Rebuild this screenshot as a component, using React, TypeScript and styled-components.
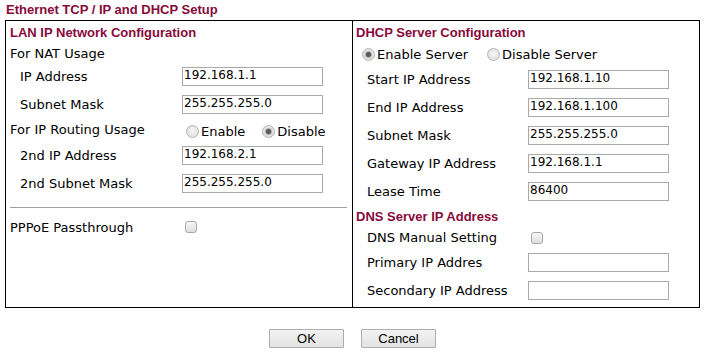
import styled, {createGlobalStyle} from 'styled-components';

const GlobalStyle = createGlobalStyle`
  * {
    box-sizing: border-box;
  }

  body {
    margin: 0;
    background: #fff;
    color: #000;
    font-family: "DejaVu Sans", Verdana, sans-serif;
    font-size: 13px;
  }
`;

const Page = styled.div`
  width: 710px;
  padding-left: 5px;
`;

const Title = styled.div`
  height: 20px;
  line-height: 20px;
  padding-left: 1px;
  font-family: "Liberation Sans", Arial, sans-serif;
  font-weight: bold;
  font-size: 13px;
  color: #870a3a;
`;

const Frame = styled.div`
  display: grid;
  grid-template-columns: 347px 346px;
  width: 695px;
  border: 1px solid #000;
`;

const Panel = styled.div<{ $divider?: boolean; $padLeft: number }>`
  display: flex;
  flex-direction: column;
  padding: 0 4px 3px ${p => p.$padLeft}px;
  border-right: ${p => (p.$divider ? '1px solid #000' : 'none')};
`;

const SectionHeader = styled.div<{ $h: number }>`
  display: flex;
  align-items: center;
  height: ${p => p.$h}px;
  font-family: "Liberation Sans", Arial, sans-serif;
  font-weight: bold;
  font-size: 13px;
  color: #870a3a;
`;

const Row = styled.div<{ $h: number }>`
  display: grid;
  grid-template-columns: 172px auto;
  align-items: center;
  height: ${p => p.$h}px;
`;

const Label = styled.div<{ $indent?: number }>`
  padding-left: ${p => p.$indent ?? 0}px;
  white-space: nowrap;
`;

const TextInput = styled.input`
  width: 141px;
  height: 19px;
  margin: 0;
  padding: 0 1px 2px;
  border: 1px solid #a9a9a9;
  border-radius: 0;
  background: #fff;
  color: #000;
  font-family: "DejaVu Sans", Verdana, sans-serif;
  font-size: 12px;
  outline: none;
`;

const RadioGroup = styled.div<{ $gap: number; $offset: number; $drop?: number }>`
  display: flex;
  align-items: center;
  gap: ${p => p.$gap}px;
  padding-left: ${p => p.$offset}px;
  padding-top: ${p => p.$drop ?? 0}px;
`;

const RadioOption = styled.label`
  display: flex;
  align-items: center;
  gap: 2px;
  white-space: nowrap;
`;

const RadioDot = styled.span<{ $checked?: boolean }>`
  position: relative;
  width: 13px;
  height: 13px;
  border-radius: 50%;
  border: 1px solid #b4b4b4;
  background: radial-gradient(circle at 50% 45%, #f6f6f6 0%, #e2e2e2 70%, #d6d6d6 100%);

  &::after {
    content: '';
    display: ${p => (p.$checked ? 'block' : 'none')};
    position: absolute;
    left: 3px;
    top: 3px;
    width: 5px;
    height: 5px;
    border-radius: 50%;
    background: #5a5a5a;
    box-shadow: 0 0 1px 1px #a8a8a8;
  }
`;

const CheckBox = styled.span`
  display: block;
  width: 12px;
  height: 12px;
  margin-left: 3px;
  border: 1px solid #a8a8a8;
  border-radius: 3px;
  background: linear-gradient(#f7f7f7, #dedede);
`;

const Rule = styled.div`
  height: 1px;
  margin: 10px 1px 0 0;
  background: #a0a0a0;
`;

const Spaced = styled.div`
  margin-top: 5px;
`;

const Actions = styled.div`
  display: flex;
  justify-content: center;
  gap: 17px;
  width: 695px;
  margin-top: 21px;
`;

const Button = styled.button`
  width: 75px;
  height: 19px;
  padding: 0;
  border: 1px solid #adadad;
  border-radius: 1px;
  background: linear-gradient(#f3f3f3, #e3e3e3);
  color: #000;
  font-family: "Liberation Sans", Arial, sans-serif;
  font-size: 13px;
  line-height: 17px;
`;

function Field(props: { label: string; value: string; indent: number }) {
  return (
    <Row $h={28}>
      <Label $indent={props.indent}>{props.label}</Label>
      <TextInput defaultValue={props.value}/>
    </Row>
  );
}

const dhcpFields = [
  {label: 'Start IP Address', value: '192.168.1.10'},
  {label: 'End IP Address', value: '192.168.1.100'},
  {label: 'Subnet Mask', value: '255.255.255.0'},
  {label: 'Gateway IP Address', value: '192.168.1.1'},
  {label: 'Lease Time', value: '86400'},
];

export default function App() {
  return (
    <>
      <GlobalStyle/>
      <Page>
        <Title>Ethernet TCP / IP and DHCP Setup</Title>
        <Frame>
          <Panel $divider $padLeft={4}>
            <SectionHeader $h={23}>LAN IP Network Configuration</SectionHeader>
            <Row $h={18}><Label>For NAT Usage</Label></Row>
            <Field label='IP Address' value='192.168.1.1' indent={10}/>
            <Field label='Subnet Mask' value='255.255.255.0' indent={10}/>
            <Row $h={23}>
              <Label>For IP Routing Usage</Label>
              <RadioGroup $gap={17} $offset={4} $drop={3}>
                <RadioOption><RadioDot/>Enable</RadioOption>
                <RadioOption><RadioDot $checked/>Disable</RadioOption>
              </RadioGroup>
            </Row>
            <Field label='2nd IP Address' value='192.168.2.1' indent={10}/>
            <Field label='2nd Subnet Mask' value='255.255.255.0' indent={10}/>
            <Rule/>
            <Spaced>
              <Row $h={28}>
                <Label>PPPoE Passthrough</Label>
                <CheckBox/>
              </Row>
            </Spaced>
          </Panel>
          <Panel $padLeft={3}>
            <SectionHeader $h={23}>DHCP Server Configuration</SectionHeader>
            <RadioGroup $gap={19} $offset={6} style={{height: 21}}>
              <RadioOption><RadioDot $checked/>Enable Server</RadioOption>
              <RadioOption><RadioDot/>Disable Server</RadioOption>
            </RadioGroup>
            {dhcpFields.map(f => (
              <Field key={f.label} label={f.label} value={f.value} indent={11}/>
            ))}
            <SectionHeader $h={22}>DNS Server IP Address</SectionHeader>
            <Row $h={21}>
              <Label $indent={11}>DNS Manual Setting</Label>
              <CheckBox/>
            </Row>
            <Field label='Primary IP Addres' value='' indent={11}/>
            <Field label='Secondary IP Address' value='' indent={11}/>
          </Panel>
        </Frame>
        <Actions>
          <Button>OK</Button>
          <Button>Cancel</Button>
        </Actions>
      </Page>
    </>
  );
}
